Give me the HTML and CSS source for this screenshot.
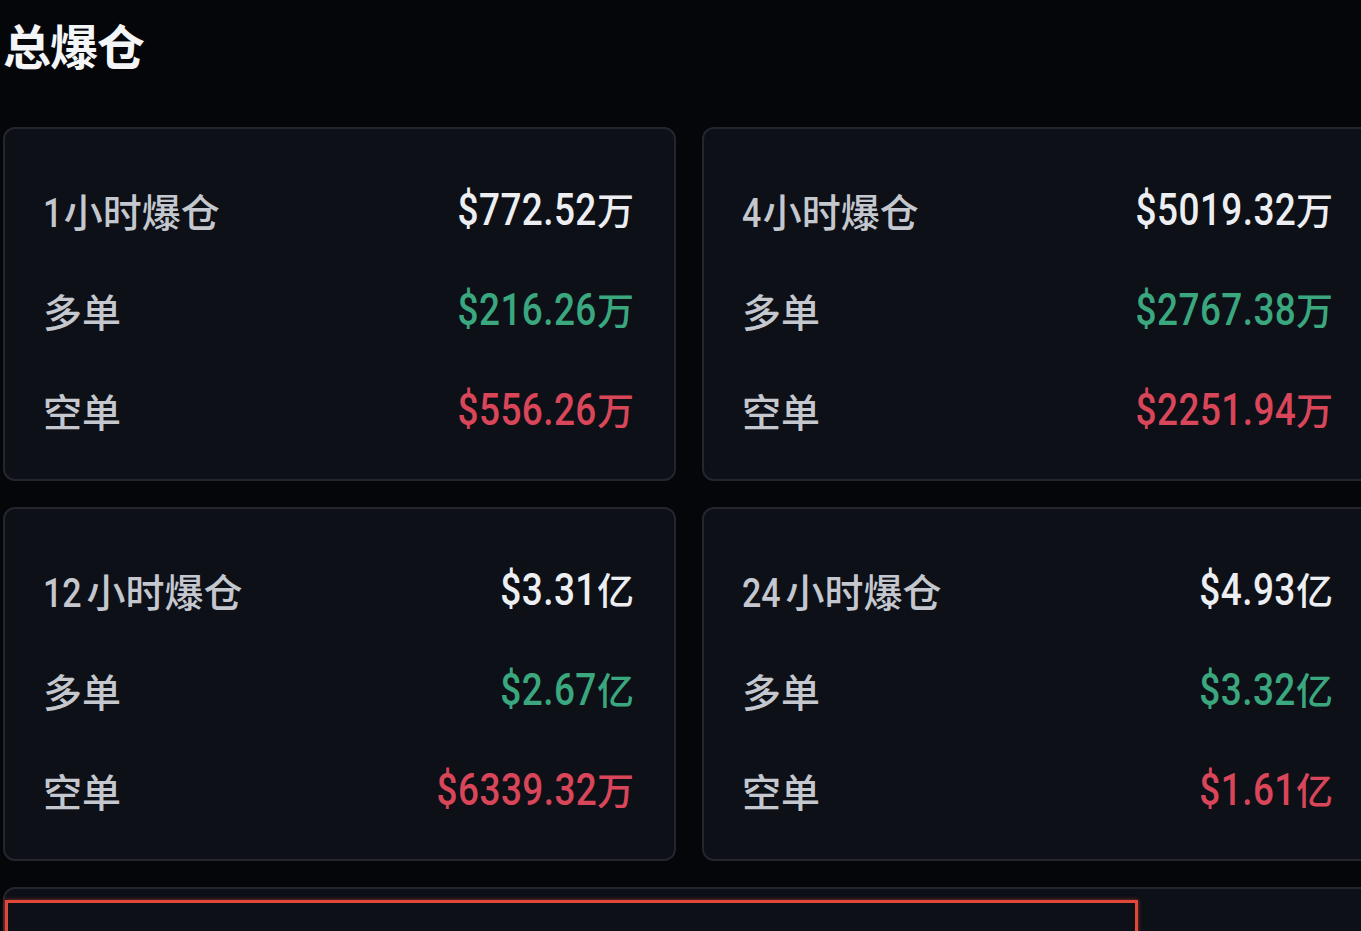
FILE: index.html
```html
<!DOCTYPE html>
<html lang="zh-CN">
<head>
<meta charset="utf-8">
<title>总爆仓</title>
<link rel="stylesheet" href="styles.css">
</head>
<body>
<div class="page">
  <h1 class="title">总爆仓</h1>
  <div class="grid">
    <div class="card">
      <div class="row"><span class="label strong"><span class="num">1</span>小时爆仓</span><span class="value total"><span class="num">$772.52</span><span class="unit">万</span></span></div>
      <div class="row"><span class="label">多单</span><span class="value long"><span class="num">$216.26</span><span class="unit">万</span></span></div>
      <div class="row"><span class="label">空单</span><span class="value short"><span class="num">$556.26</span><span class="unit">万</span></span></div>
    </div>
    <div class="card">
      <div class="row"><span class="label strong"><span class="num">4</span>小时爆仓</span><span class="value total"><span class="num">$5019.32</span><span class="unit">万</span></span></div>
      <div class="row"><span class="label">多单</span><span class="value long"><span class="num">$2767.38</span><span class="unit">万</span></span></div>
      <div class="row"><span class="label">空单</span><span class="value short"><span class="num">$2251.94</span><span class="unit">万</span></span></div>
    </div>
    <div class="card">
      <div class="row"><span class="label strong"><span class="num">12</span>小时爆仓</span><span class="value total"><span class="num">$3.31</span><span class="unit">亿</span></span></div>
      <div class="row"><span class="label">多单</span><span class="value long"><span class="num">$2.67</span><span class="unit">亿</span></span></div>
      <div class="row"><span class="label">空单</span><span class="value short"><span class="num">$6339.32</span><span class="unit">万</span></span></div>
    </div>
    <div class="card">
      <div class="row"><span class="label strong"><span class="num">24</span>小时爆仓</span><span class="value total"><span class="num">$4.93</span><span class="unit">亿</span></span></div>
      <div class="row"><span class="label">多单</span><span class="value long"><span class="num">$3.32</span><span class="unit">亿</span></span></div>
      <div class="row"><span class="label">空单</span><span class="value short"><span class="num">$1.61</span><span class="unit">亿</span></span></div>
    </div>
    <div class="card card-wide">
      <div class="highlight"></div>
    </div>
  </div>
</div>
</body>
</html>
```

FILE: styles.css
```css
html, body {
  margin: 0;
  padding: 0;
  background: #05060a;
  overflow: hidden;
}

.page {
  width: 1361px;
  height: 931px;
  overflow: hidden;
  padding: 0 0 0 3px;
  box-sizing: border-box;
  font-family: "Noto Sans CJK SC", "Noto Sans", sans-serif;
}

.title {
  margin: 0;
  padding: 14px 0 0 0;
  height: 127px;
  box-sizing: border-box;
  font-size: 48px;
  line-height: 60px;
  font-weight: 700;
  color: #f4f5f7;
  letter-spacing: -1px;
}

.grid {
  display: grid;
  grid-template-columns: 673px 673px;
  column-gap: 26px;
  row-gap: 26px;
  width: 1372px;
}

.card {
  position: relative;
  background: #0d1017;
  border: 2px solid #23262e;
  border-radius: 12px;
  padding: 31px 40px 20px 38px;
  box-sizing: border-box;
  height: 354px;
}

.card-wide {
  grid-column: 1 / span 2;
  height: 200px;
}

.row {
  display: flex;
  justify-content: space-between;
  align-items: center;
  height: 100px;
}

.label {
  font-size: 39px;
  color: #c4c7ce;
  font-weight: 500;
  display: flex;
  align-items: baseline;
}

.label .num {
  font-family: "Roboto", sans-serif;
  font-size: 40px;
  font-weight: 500;
  display: inline-block;
  transform: scaleX(0.85);
  transform-origin: left center;
  margin-right: -2px;
}

.value {
  line-height: 1;
  display: flex;
  align-items: baseline;
}

.value .num {
  font-family: "Roboto", sans-serif;
  font-size: 44px;
  font-weight: 500;
  letter-spacing: 0.5px;
  display: inline-block;
  transform: scaleX(0.84);
  transform-origin: right center;
}

.unit {
  font-family: "Noto Sans CJK SC", sans-serif;
  font-size: 37px;
  font-weight: 500;
  margin-left: 0;
}

.total { color: #eceef2; }
.long { color: #3aa77f; }
.short { color: #d94659; }

.highlight {
  position: absolute;
  left: 0;
  top: 11px;
  width: 1133px;
  height: 200px;
  border: 3px solid #e2483a;
  box-shadow: 0 0 4px rgba(226, 72, 58, 0.6);
  box-sizing: border-box;
}
```
